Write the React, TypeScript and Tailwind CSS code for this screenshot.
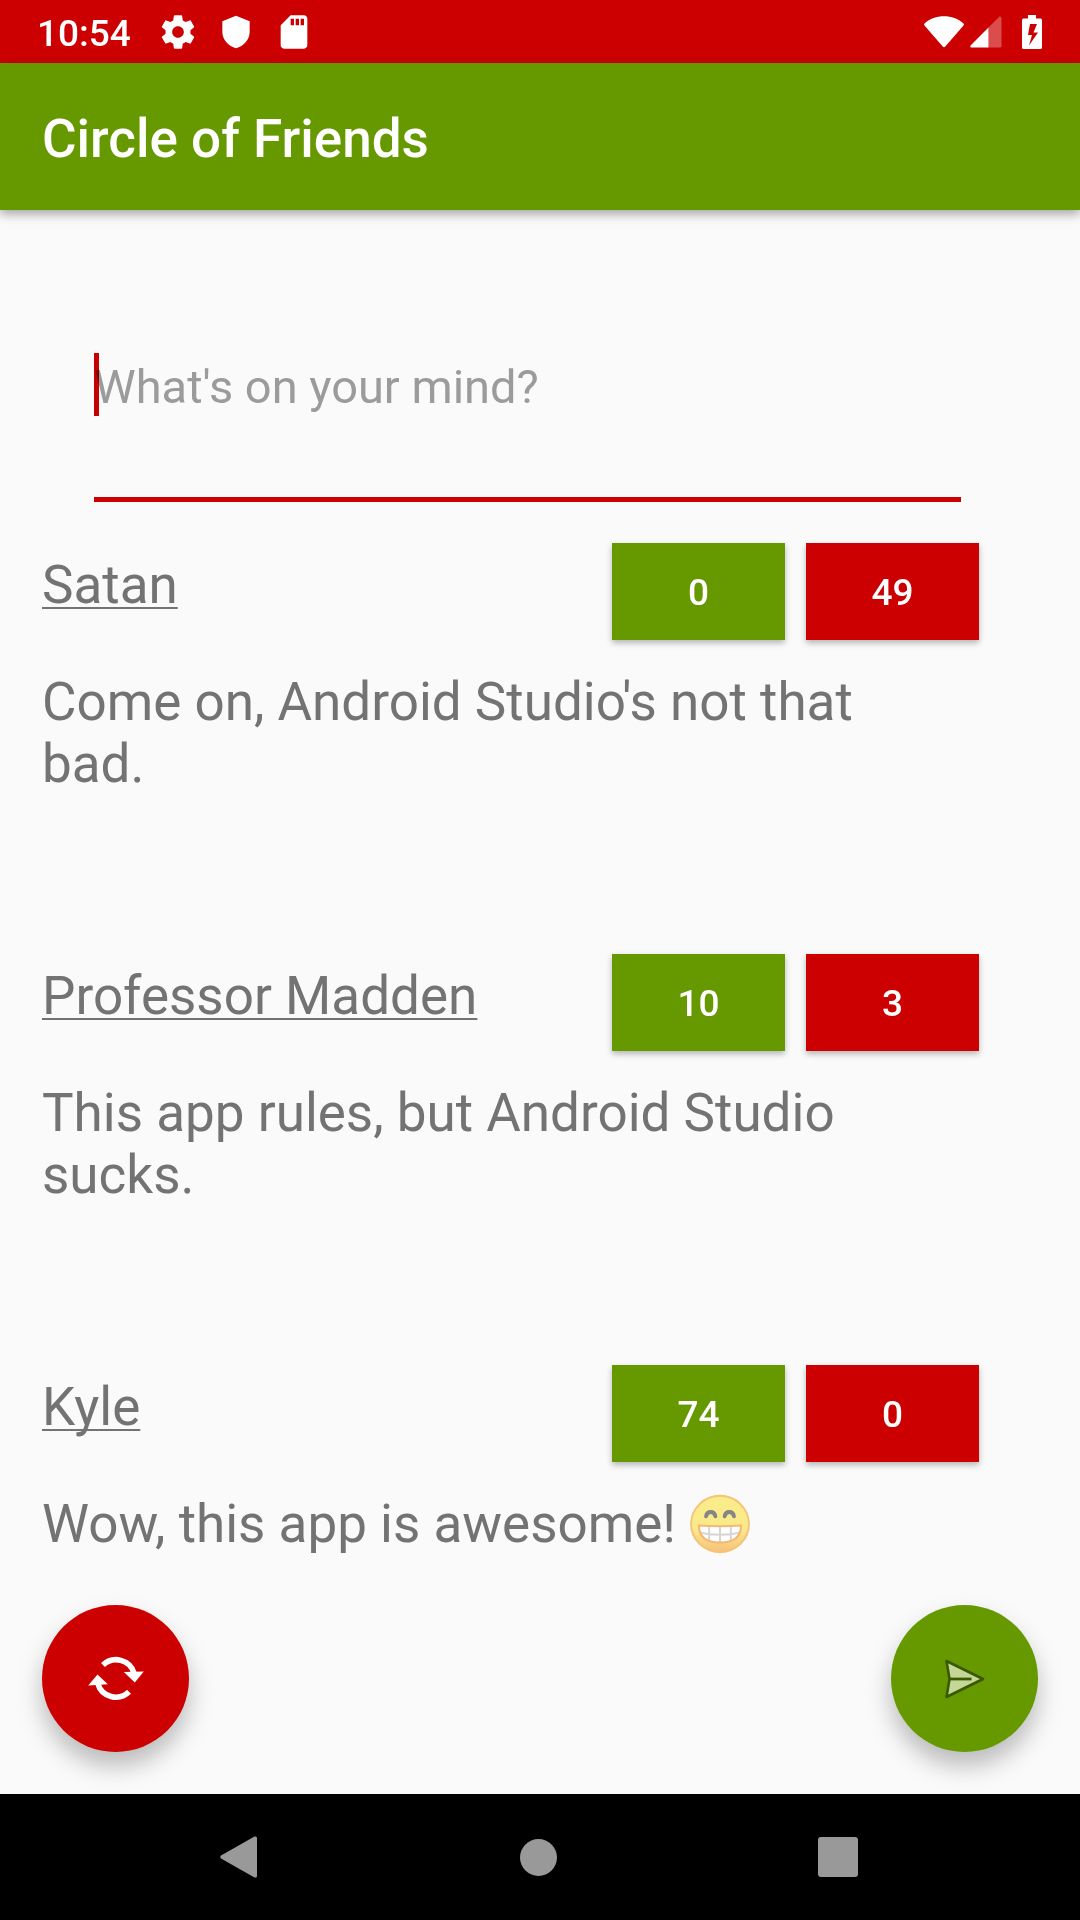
import type { ReactNode } from "react";

type Post = {
  id: number;
  author: string;
  text: ReactNode;
  likes: number;
  dislikes: number;
};

function GrinEmoji() {
  return (
    <svg role="img" aria-label="grinning face" viewBox="0 0 60 60" className="inline-block size-[62px] align-[-13px]">
      <defs>
        <linearGradient id="face" x1="0" y1="0" x2="0" y2="1">
          <stop offset="0" stopColor="#fbec8b" />
          <stop offset="0.6" stopColor="#fae98a" />
          <stop offset="1" stopColor="#f7c07c" />
        </linearGradient>
        <clipPath id="mouth">
          <path d="M9.500 31.500 Q30 33 50.500 31.500 Q50 48 30 48 Q10 48 9.500 31.500Z" />
        </clipPath>
      </defs>
      <ellipse cx="30" cy="30" rx="28" ry="27.300" fill="url(#face)" stroke="#f5c375" strokeWidth="1.800" />
      <path d="M16.500 22.500c1-5.500 8-5.500 9 0M34.500 22.500c1-5.500 8-5.500 9 0" fill="none" stroke="#858585" strokeWidth="3.800" strokeLinecap="round" />
      <g clipPath="url(#mouth)">
        <rect x="8" y="30" width="44" height="19" fill="#fff" />
        <path d="M19.500 30v18M30 30v18M40.500 30v18M9 38Q30 43 51 38" fill="none" stroke="#d5d5d5" strokeWidth="1.900" />
      </g>
      <path d="M9.500 31.500 Q30 33 50.500 31.500 Q50 48 30 48 Q10 48 9.500 31.500Z" fill="none" stroke="#f4b973" strokeWidth="2" strokeLinejoin="round" />
    </svg>
  );
}

const posts: Post[] = [
  { id: 1, author: "Satan", text: "Come on, Android Studio's not that bad.", likes: 0, dislikes: 49 },
  { id: 2, author: "Professor Madden", text: "This app rules, but Android Studio sucks.", likes: 10, dislikes: 3 },
  { id: 3, author: "Kyle", text: <>Wow, this app is awesome! <GrinEmoji /></>, likes: 74, dislikes: 0 },
];

function StatusBar() {
  return (
    <div className="flex h-[63px] shrink-0 items-center justify-between bg-[#cc0000] pr-[38px] pl-[37px] text-white">
      <div className="flex items-center">
        <span className="mr-[27px] pt-1 text-[37px] leading-[44px] font-medium">10:54</span>
        <svg viewBox="0 0 24 24" fill="currentColor" className="mr-[18px] size-[40px]" aria-hidden="true">
          <path d="M19.430 12.980c.04-.32.07-.64.07-.98s-.03-.66-.07-.98l2.110-1.650c.19-.15.24-.42.12-.64l-2-3.460c-.12-.22-.39-.3-.61-.22l-2.490 1c-.52-.4-1.080-.73-1.690-.98l-.38-2.650C14.460 2.180 14.250 2 14 2h-4c-.25 0-.46.18-.49.42l-.38 2.650c-.61.25-1.170.59-1.690.98l-2.490-1c-.23-.09-.49 0-.61.22l-2 3.460c-.13.22-.07.49.12.64l2.110 1.650c-.04.32-.07.65-.07.98s.03.66.07.98l-2.110 1.650c-.19.15-.24.42-.12.64l2 3.460c.12.22.39.3.61.22l2.490-1c.52.4 1.080.73 1.690.98l.38 2.650c.03.24.24.42.49.42h4c.25 0 .46-.18.49-.42l.38-2.650c.61-.25 1.170-.59 1.690-.98l2.490 1c.23.09.49 0 .61-.22l2-3.460c.12-.22.07-.49-.12-.64l-2.110-1.650zM12 15.500c-1.930 0-3.500-1.570-3.500-3.500s1.570-3.500 3.500-3.500 3.500 1.570 3.500 3.500-1.570 3.500-3.500 3.500z" />
        </svg>
        <svg viewBox="0 0 24 24" fill="currentColor" className="mr-[18px] size-[40px]" aria-hidden="true">
          <path d="M12 2.300 20.200 5.500V12c0 4.500-3.700 8.600-8.200 9.800C7.500 20.600 3.800 16.500 3.800 12V5.500z" />
        </svg>
        <svg viewBox="0 0 24 24" fill="currentColor" className="size-[40px]" aria-hidden="true">
          <path d="M18 2h-8L4.020 8 4 20c0 1.100.9 2 2 2h12c1.100 0 2-.9 2-2V4c0-1.100-.9-2-2-2zm-6 6h-2V4h2v4zm3 0h-2V4h2v4zm3 0h-2V4h2v4z" />
        </svg>
      </div>
      <div className="flex items-center">
        <svg viewBox="0 0 42 34" fill="currentColor" className="mr-[5px] h-[34px] w-[42px]" aria-hidden="true">
          <path d="M1.500 8.500C12-1.200 30-1.200 40.500 8.500Q41.300 9.300 40.500 10.500L22.300 31.500Q21 33 19.700 31.500L1.500 10.500Q.7 9.300 1.500 8.500Z" />
        </svg>
        <svg viewBox="0 0 32 32" fill="currentColor" className="mr-[20px] size-[32px]" aria-hidden="true">
          <path d="M29.500.5Q31.500 0 31.500 2.500V30.500Q31.500 31.500 30 31.500H18.500V11.500Z" opacity=".3" />
          <path d="M18.500 11.500V31.500H1.500Q-.5 31 .8 29.300Z" />
        </svg>
        <svg viewBox="0 0 20 34" fill="currentColor" fillRule="evenodd" className="h-[34px] w-[20px]" aria-hidden="true">
          <path d="M6 0h8v3.500h4.500Q20 3.500 20 5v27.500Q20 34 18.500 34h-17Q0 34 0 32.500V5Q0 3.500 1.500 3.500H6zM8 9 6 20h4l-3 10.500 9-13h-4.500L15 9z" />
        </svg>
      </div>
    </div>
  );
}

function VoteButton({ count, kind }: { count: number; kind: "like" | "dislike" }) {
  const color = kind === "like" ? "bg-[#669900]" : "bg-[#cc0000]";
  return (
    <button
      type="button"
      aria-label={`${kind} ${count}`}
      className={`h-[97px] w-[173px] pt-[3px] text-[37px] leading-[44px] font-medium text-white shadow-[0_3px_6px_rgba(0,0,0,0.28)] ${color}`}
    >
      {count}
    </button>
  );
}

function PostItem({ post }: { post: Post }) {
  return (
    <article className="h-[411px] shrink-0 pr-[101px] pl-[42px]">
      <div className="flex items-start justify-between">
        <h2 className="pt-[11px] text-[53px] leading-[62px]">
          <a href="#" className="underline decoration-2 underline-offset-[4px] [text-decoration-skip-ink:none]">
            {post.author}
          </a>
        </h2>
        <div className="flex gap-[21px]">
          <VoteButton count={post.likes} kind="like" />
          <VoteButton count={post.dislikes} kind="dislike" />
        </div>
      </div>
      <p className="mt-[31px] mr-[60px] text-[53px] leading-[62px]">{post.text}</p>
    </article>
  );
}

export default function App() {
  return (
    <div className="flex h-screen flex-col overflow-hidden bg-[#fafafa] font-['Roboto',sans-serif] text-[#737373]">
      <StatusBar />
      <header className="z-10 flex h-[147px] shrink-0 items-center bg-[#669900] px-[42px] shadow-[0_4px_10px_rgba(0,0,0,0.35)]">
        <h1 className="pt-1 text-[53px] leading-[62px] font-medium text-white">Circle of Friends</h1>
      </header>
      <main className="relative flex min-h-0 flex-1 flex-col overflow-hidden">
        <div className="relative mt-[62px] mr-[119px] ml-[94px] shrink-0">
          <input
            type="text"
            aria-label="What's on your mind?"
            placeholder="What's on your mind?"
            className="block h-[230px] w-full border-b-[5px] border-[#cc0000] bg-transparent pt-1 text-[47px] leading-[56px] text-[#333333] outline-none placeholder:text-[#9b9b9b] placeholder:opacity-100"
          />
          <span className="pointer-events-none absolute top-[81px] left-0 h-[63px] w-[5px] bg-[#cc0000] mix-blend-multiply" />
        </div>
        <section aria-label="Posts" className="mt-[41px] flex flex-col">
          {posts.map((post) => (
            <PostItem key={post.id} post={post} />
          ))}
        </section>
        <div className="absolute inset-x-[42px] bottom-[42px] flex justify-between">
          <button
            type="button"
            aria-label="Refresh"
            className="flex size-[147px] items-center justify-center rounded-full bg-[#cc0000] shadow-[0_14px_24px_rgba(0,0,0,0.26)]"
          >
            <svg viewBox="0 0 56 46" className="h-[46px] w-[56px]" fill="#fff" aria-hidden="true">
              <path d="M15 9A18.800 18.800 0 0 1 46 17" fill="none" stroke="#fff" strokeWidth="5.600" />
              <path d="M35.800 16.100 55.800 15.500 46.800 26.500Z" />
              <path d="M41 35.800A18.800 18.800 0 0 1 9.800 27.500" fill="none" stroke="#fff" strokeWidth="5.600" />
              <path d="M.2 29.500 9.500 18.500 19.800 28.200Z" />
            </svg>
          </button>
          <button
            type="button"
            aria-label="Send"
            className="flex size-[147px] items-center justify-center rounded-full bg-[#669900] shadow-[0_14px_24px_rgba(0,0,0,0.26)]"
          >
            <svg viewBox="0 0 42 40" className="h-[40px] w-[42px]" aria-hidden="true">
              <path d="M2.500 2 39 20 2.500 38 5.500 20Z" fill="#c4d799" stroke="#3a5800" strokeWidth="2.600" strokeLinejoin="round" />
              <path d="M5 20H27.500" stroke="#3a5800" strokeWidth="2.800" />
            </svg>
          </button>
        </div>
      </main>
      <nav aria-label="System navigation" className="flex h-[126px] shrink-0 items-center justify-between bg-black pr-[222px] pl-[220px]">
        <button type="button" aria-label="Back">
          <svg viewBox="0 0 38 42" className="h-[42px] w-[38px]" fill="#999">
            <path d="M34.500.5Q37 0 37 2V40Q37 42 34.500 41.500L1 22.500Q-.5 21 1 19.500Z" />
          </svg>
        </button>
        <button type="button" aria-label="Home" className="size-[37px] rounded-full bg-[#999]" />
        <button type="button" aria-label="Recent apps" className="size-[40px] rounded-[3px] bg-[#999]" />
      </nav>
    </div>
  );
}
